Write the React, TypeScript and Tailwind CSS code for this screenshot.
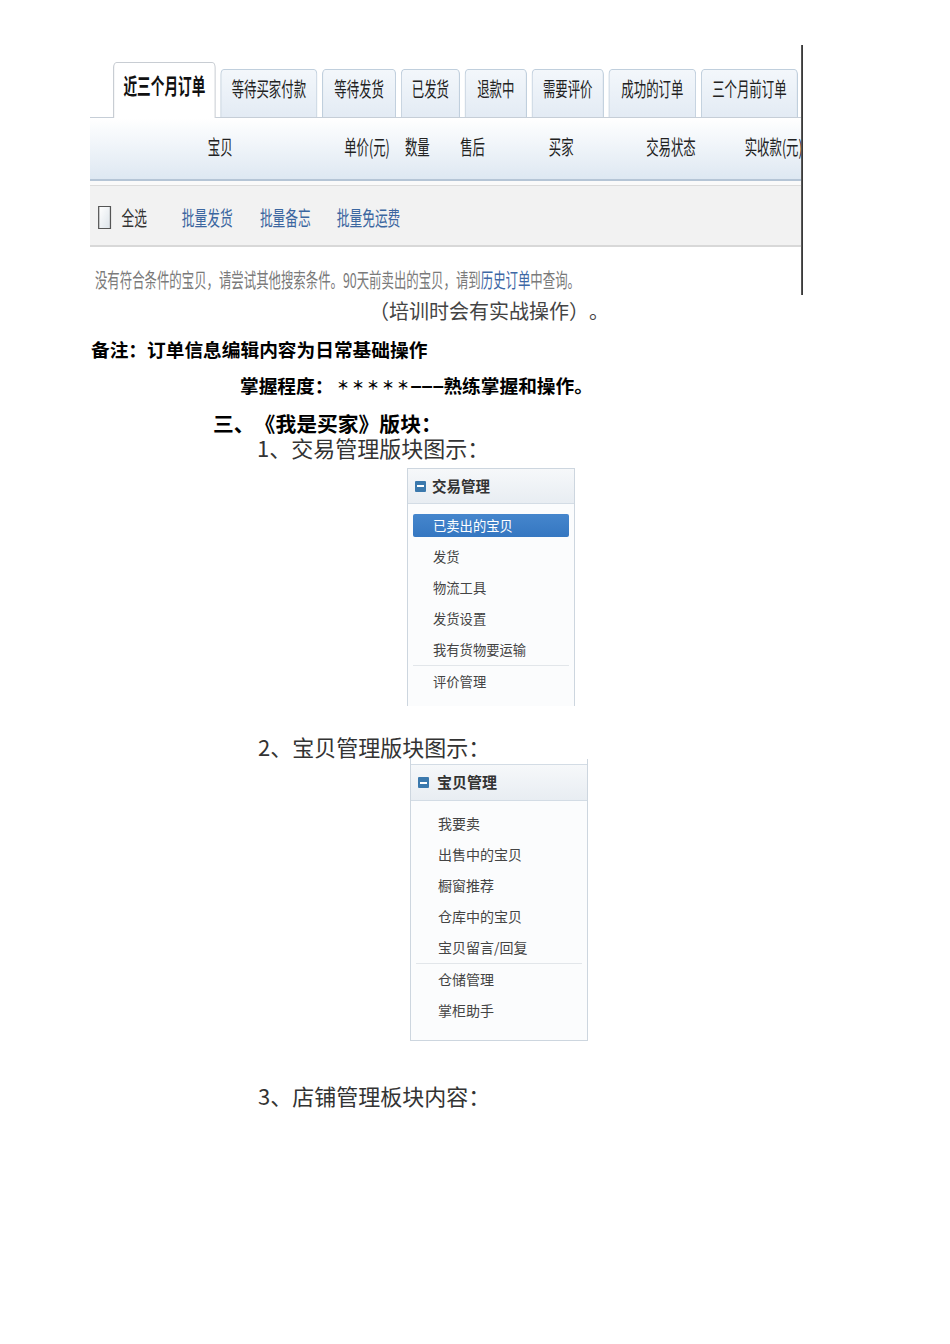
export default function App() {
  const tabs = [
    { t: '等待买家付款', w: 'w-[157px]' },
    { t: '等待发货', w: 'w-[120px]' },
    { t: '已发货', w: 'w-[96px]' },
    { t: '退款中', w: 'w-[101px]' },
    { t: '需要评价', w: 'w-[117px]' },
    { t: '成功的订单', w: 'w-[142px]' },
    { t: '三个月前订单', w: 'w-[157px]' },
  ];
  const trade = ['发货', '物流工具', '发货设置', '我有货物要运输'];
  const goods = ['我要卖', '出售中的宝贝', '橱窗推荐', '仓库中的宝贝', '宝贝留言/回复'];

  return (
    <div className="w-[950px] min-h-[1344px] bg-white pt-[45px] font-['Noto_Sans_CJK_SC',sans-serif] text-[#333] [text-spacing-trim:space-all]">
      {/* screenshot of the order list */}
      <div className="ml-[90px] w-[713px] h-[250px] overflow-hidden">
        <div className="w-[1150px] h-[250px] origin-left scale-x-[0.62] border-r-[3px] border-[#3a3a3a] overflow-hidden">
          {/* tabs */}
          <div className="h-[73px] flex items-end gap-[7px] pl-[37px] border-b border-[#c6ced7]">
            <div className="w-[166px] h-[56px] -mb-px shrink-0 bg-white border-t border-x-2 border-[#c8cdd3] rounded-t-[6px] flex items-center justify-center pb-[13px] text-[22px] font-bold text-[#111] whitespace-nowrap">
              近三个月订单
            </div>
            {tabs.map((tb) => (
              <div
                key={tb.t}
                className={`${tb.w} h-[48px] shrink-0 bg-linear-to-b from-[#f3f7fb] to-[#e3ebf4] border-t border-x-2 border-[#c0cfdd] rounded-t-[6px] flex items-center justify-center pb-[10px] text-[20px] text-[#222] whitespace-nowrap`}
              >
                {tb.t}
              </div>
            ))}
          </div>
          {/* header */}
          <div className="h-[63px] border-b-2 border-[#b5c5d6] bg-linear-to-b from-white to-[#dee8f2] flex items-center pb-[3px] pl-[190px] text-[20px] text-[#222] whitespace-nowrap">
            <span className="w-[220px] shrink-0">宝贝</span>
            <span className="w-[98px] shrink-0">单价(元)</span>
            <span className="w-[89px] shrink-0">数量</span>
            <span className="w-[143px] shrink-0">售后</span>
            <span className="w-[157px] shrink-0">买家</span>
            <span className="w-[159px] shrink-0">交易状态</span>
            <span className="shrink-0">实收款(元)</span>
          </div>
          <div className="h-[5px] bg-[#fafafa] border-b border-[#dcdcdc]" />
          {/* bulk actions */}
          <div className="h-[61px] bg-[#f2f2f2] border-b-2 border-[#d8d8d8] flex items-center pt-[4px] text-[20.5px] whitespace-nowrap">
            <span className="ml-[13px] w-[21px] h-[23px] shrink-0 border-y border-x-2 border-[#555] bg-linear-to-br from-white to-[#dde4ea]" />
            <span className="ml-[17px] text-[#333]">全选</span>
            <span className="ml-[56px] text-[#3b66a0]">批量发货</span>
            <span className="ml-[44px] text-[#3b66a0]">批量备忘</span>
            <span className="ml-[42px] text-[#3b66a0]">批量免运费</span>
          </div>
          {/* message */}
          <div className="h-[48px] pt-[21px] pl-[8px] leading-[24px] text-[20px] text-[#7a7a7a] whitespace-nowrap">
            没有符合条件的宝贝，请尝试其他搜索条件。90天前卖出的宝贝，请到
            <span className="text-[#3d68a5]">历史订单</span>
            中查询。
          </div>
        </div>
      </div>

      <div className="h-[32px] leading-[32px] pl-[369px] text-[20px] text-[#444] whitespace-nowrap">
        （培训时会有实战操作）。
      </div>
      <div className="h-[43px] leading-[43px] pl-[91px] text-[18.7px] font-bold text-black whitespace-nowrap">
        备注：订单信息编辑内容为日常基础操作
      </div>
      <div className="h-[30px] pl-[240px] flex items-center text-[18.7px] font-bold text-black whitespace-nowrap">
        <span>掌握程度：</span>
        <span className="ml-[2px] inline-block w-[15px] text-center text-[12.5px] leading-[30px]">＊</span>
        <span className="inline-block w-[15px] text-center text-[12.5px] leading-[30px]">＊</span>
        <span className="inline-block w-[15px] text-center text-[12.5px] leading-[30px]">＊</span>
        <span className="inline-block w-[15px] text-center text-[12.5px] leading-[30px]">＊</span>
        <span className="inline-block w-[15px] text-center text-[12.5px] leading-[30px]">＊</span>
        <span className="inline-block w-[33px] font-['Liberation_Sans',sans-serif] text-[20px] leading-[30px]">–––</span>
        <span>熟练掌握和操作。</span>
      </div>
      <div className="mt-[10px] h-[26px] leading-[26px] pl-[213px] text-[20.8px] font-bold text-black whitespace-nowrap">
        三、《我是买家》版块：
      </div>
      <div className="h-[22px] leading-[22px] pl-[257px] text-[22px] text-[#333] whitespace-nowrap">
        1、交易管理版块图示：
      </div>

      {/* trade management panel */}
      <div className="mt-[10px] ml-[407px] w-[168px] h-[238px] border-x border-t border-[#cdd6df] bg-[#fbfcfd]">
        <div className="h-[35px] border-b border-[#d3dce5] bg-linear-to-b from-[#f6f8fa] to-[#e8edf2] flex items-center pl-[7px]">
          <span className="w-[11px] h-[11px] rounded-[1px] bg-[#3b79ad] flex items-center justify-center">
            <span className="w-[7px] h-[2px] bg-white" />
          </span>
          <span className="ml-[6px] text-[14.5px] font-bold text-[#333]">交易管理</span>
        </div>
        <div className="pt-[6px] px-[5px] text-[13.3px] text-[#444]">
          <div className="h-[31px] flex items-center">
            <div className="w-full h-[23px] rounded-[2px] bg-linear-to-b from-[#4586cd] to-[#3577c1] flex items-center pl-[20px] text-white">
              已卖出的宝贝
            </div>
          </div>
          {trade.map((t) => (
            <div key={t} className="h-[31px] flex items-center pl-[20px]">
              {t}
            </div>
          ))}
          <div className="h-[32px] border-t border-[#e2e6ea] flex items-center pl-[20px]">评价管理</div>
        </div>
      </div>

      <div className="mt-[27px] h-[26px] leading-[26px] pl-[258px] text-[22px] text-[#333] whitespace-nowrap">
        2、宝贝管理版块图示：
      </div>

      {/* goods management panel */}
      <div className="ml-[410px] w-[178px] h-[282px] border-x border-b border-[#cdd6df] pt-[5px] bg-white">
        <div className="h-[37px] border-y border-[#d3dce5] bg-linear-to-b from-[#f6f8fa] to-[#e8edf2] flex items-center pl-[7px]">
          <span className="w-[11px] h-[11px] rounded-[1px] bg-[#3b79ad] flex items-center justify-center">
            <span className="w-[7px] h-[2px] bg-white" />
          </span>
          <span className="ml-[8px] text-[15px] font-bold text-[#333]">宝贝管理</span>
        </div>
        <div className="h-[239px] bg-[#fbfcfd] pt-[7px] px-[5px] text-[14px] text-[#444]">
          {goods.map((t) => (
            <div key={t} className="h-[31px] flex items-center pl-[22px]">
              {t}
            </div>
          ))}
          <div className="h-[32px] border-t border-[#e2e6ea] flex items-center pl-[22px]">仓储管理</div>
          <div className="h-[31px] flex items-center pl-[22px]">掌柜助手</div>
        </div>
      </div>

      <div className="mt-[41px] h-[26px] leading-[26px] pl-[258px] text-[22px] text-[#333] whitespace-nowrap">
        3、店铺管理板块内容：
      </div>
    </div>
  );
}
